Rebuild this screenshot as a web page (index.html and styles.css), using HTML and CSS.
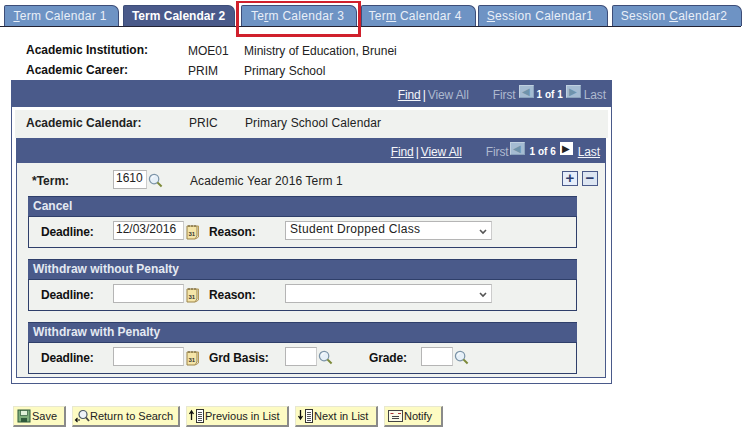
FILE: index.html
```html
<!DOCTYPE html>
<html lang="en">
<head>
<meta charset="utf-8">
<title>Term Calendar</title>
<link rel="stylesheet" href="styles.css">
</head>
<body>
<svg class="defs" width="0" height="0" aria-hidden="true">
  <symbol id="lens" viewBox="0 0 16 16">
    <circle cx="6.5" cy="6.5" r="5" fill="#e6f0f8" stroke="#7c94a8" stroke-width="1.3"/>
    <path d="M4 6a3 3 0 0 1 3-3" fill="none" stroke="#fff" stroke-width="1"/>
    <path d="M10 10l4.5 4.5" stroke="#7d8a3a" stroke-width="2.2"/>
  </symbol>
  <symbol id="cal" viewBox="0 0 13 16">
    <path d="M1 2h10v10l-2 3H1z" fill="#f5e5a8" stroke="#9a8348"/>
    <path d="M3 1v2M6 1v2M9 1v2" stroke="#6a5a30"/>
    <path d="M11 2h1.500v11l-3 2" fill="none" stroke="#b59a58"/>
    <text x="2.500" y="11.500" class="cal-text">31</text>
  </symbol>
  <symbol id="doclist" viewBox="0 0 17 16">
    <rect x="8.500" y="1.500" width="7" height="13" fill="#fff" stroke="#333"/>
    <path d="M10 4.500h4M10 6.500h4M10 8.500h4M10 10.500h4M10 12.500h4" stroke="#555"/>
  </symbol>
</svg>

<nav class="tabs">
  <a class="tab w115"><u>T</u>erm Calendar 1</a>
  <a class="tab tab-on w113">Term Calendar 2</a>
  <a class="tab w116 tab-mark">Te<u>r</u>m Calendar 3</a>
  <a class="tab w114">Ter<u>m</u> Calendar 4</a>
  <a class="tab w130"><u>S</u>ession Calendar1</a>
  <a class="tab w130">Session <u>C</u>alendar2</a>
</nav>

<section class="keys">
  <b class="keys-label">Academic Institution:</b><span>MOE01</span><span>Ministry of Education, Brunei</span>
  <b class="keys-label">Academic Career:</b><span>PRIM</span><span>Primary School</span>
</section>

<main class="outer">
  <div class="bar bar-outer">
    <span class="lnk">Find</span><span class="sep">|</span><span class="dim">View All</span>
    <span class="dim first">First</span>
    <span class="nav nav-off">◀</span><b class="count">1 of 1</b><span class="nav nav-off">▶</span>
    <span class="dim">Last</span>
  </div>
  <div class="outer-body">
    <div class="cal-row">
      <b class="cal-label">Academic Calendar:</b><span class="cal-code">PRIC</span><span class="spaced">Primary School Calendar</span>
    </div>
    <div class="inner">
      <div class="bar bar-inner">
        <span class="lnk">Find</span><span class="sep">|</span><span class="lnk">View All</span>
        <span class="dim first">First</span>
        <span class="nav nav-off">◀</span><b class="count">1 of 6</b><span class="nav nav-on">▶</span>
        <span class="lnk">Last</span>
      </div>
      <div class="term-row">
        <b class="term-label">*Term:</b>
        <span class="field f34">1610</span>
        <svg class="lens"><use href="#lens"/></svg>
        <span class="term-desc spaced">Academic Year 2016 Term 1</span>
        <span class="pm"><span class="pm-btn pm-add">+</span><span class="pm-btn">−</span></span>
      </div>

      <section class="group g-first">
        <h2 class="group-head">Cancel</h2>
        <div class="group-row">
          <b class="l-dead">Deadline:</b>
          <span class="field f71">12/03/2016</span>
          <svg class="cal"><use href="#cal"/></svg>
          <b class="l-reason">Reason:</b>
          <span class="field sel">Student Dropped Class<svg class="chev" viewBox="0 0 8 6"><path d="M1 1l3 3 3-3" fill="none" stroke="#555" stroke-width="1.600"/></svg></span>
        </div>
      </section>

      <section class="group">
        <h2 class="group-head">Withdraw without Penalty</h2>
        <div class="group-row">
          <b class="l-dead">Deadline:</b>
          <span class="field f71"></span>
          <svg class="cal"><use href="#cal"/></svg>
          <b class="l-reason">Reason:</b>
          <span class="field sel"><svg class="chev" viewBox="0 0 8 6"><path d="M1 1l3 3 3-3" fill="none" stroke="#555" stroke-width="1.600"/></svg></span>
        </div>
      </section>

      <section class="group">
        <h2 class="group-head">Withdraw with Penalty</h2>
        <div class="group-row">
          <b class="l-dead">Deadline:</b>
          <span class="field f71"></span>
          <svg class="cal"><use href="#cal"/></svg>
          <b class="l-reason">Grd Basis:</b>
          <span class="field f32"></span>
          <svg class="lens"><use href="#lens"/></svg>
          <b class="l-grade">Grade:</b>
          <span class="field f32"></span>
          <svg class="lens"><use href="#lens"/></svg>
        </div>
      </section>
    </div>
  </div>
</main>

<footer class="actions">
  <a class="btn b-save">
    <svg class="ic" viewBox="0 0 14 14"><rect x="1" y="1" width="12" height="12" fill="#7fae7c" stroke="#2f5a3a"/><rect x="3.500" y="1.500" width="7" height="5" fill="#dff0d8" stroke="#2f5a3a" stroke-width=".7"/><rect x="4" y="9" width="6" height="4" fill="#2f5a3a"/></svg>Save</a>
  <a class="btn b-return">
    <svg class="ic ic-ret" viewBox="0 0 16 14"><circle cx="9" cy="5.500" r="4" fill="#eef4fa" stroke="#4a5a6a" stroke-width="1.200"/><path d="M12 8.500l3 3.500" stroke="#444" stroke-width="1.800"/><path d="M6 11H1.500M3.500 9l-2 2 2 2" fill="none" stroke="#111" stroke-width="1.100"/></svg>Return to Search</a>
  <a class="btn b-prev">
    <svg class="ic-list" viewBox="0 0 17 16"><use href="#doclist"/><path d="M3.500 12V4M1.500 6l2-3 2 3" fill="none" stroke="#111" stroke-width="1.300"/></svg>Previous in List</a>
  <a class="btn b-next">
    <svg class="ic-list" viewBox="0 0 17 16"><use href="#doclist"/><path d="M3.500 2v8M1.500 8l2 3 2-3" fill="none" stroke="#111" stroke-width="1.300"/></svg>Next in List</a>
  <a class="btn b-notify">
    <svg class="ic-note" viewBox="0 0 16 14"><rect x=".5" y="1.500" width="14" height="11" fill="#fbfbe8" stroke="#444"/><path d="M2.500 4.500h3M10 4.500h3" stroke="#a33"/><path d="M4 7.500h7M4 9.500h7" stroke="#444"/></svg>Notify</a>
</footer>
</body>
</html>
```
FILE: styles.css
```css
* { box-sizing: border-box; }
html, body { margin: 0; height: 435px; overflow: hidden; }
body { background: #fff; color: #222; font: 12px/14px "Liberation Sans", Arial, sans-serif; }
.defs { position: absolute; }
.cal-text { font: bold 6px "Liberation Sans", sans-serif; fill: #333; }
.spaced { letter-spacing: .12px; }

.tabs { display: flex; height: 27px; padding: 5px 0 0 4px; border-bottom: 1px solid #223; width: 741px; }
.tab { flex: none; height: 21px; margin-right: 4px; padding-right: 3px; border: 1px solid #3d4d78; border-bottom: 0; border-radius: 2px 7px 0 0; background: #6e93c4; color: #e9eff8; text-align: center; line-height: 20px; letter-spacing: .3px; }
.tab-on { background: #4a5a8a; color: #fff; font-weight: bold; letter-spacing: 0; margin-right: 6px; padding-right: 1px; }
.w115 { width: 115px; } .w113 { width: 112px; } .w116 { width: 116px; margin-right: 4px; } .w114 { width: 115px; margin-right: 2px; padding-right: 7px; } .w130 { width: 130px; padding-right: 6px; }
.tab-mark { position: relative; }
.tab-mark::after { content: ""; position: absolute; left: -6px; right: -5px; top: -5px; height: 31px; border: 3px solid #d0202c; border-top-width: 2px; }

.keys { display: grid; grid-template-columns: 162px 56px 1fr; grid-auto-rows: 20px; margin: 14px 0 -1px 26px; height: 40px; align-items: center; }
.keys-label { color: #111; position: relative; top: -1px; }

.outer { margin: 0 0 0 11px; width: 601px; height: 304px; border: 1px solid #4a5a8a; border-top: 0; }
.bar { display: flex; justify-content: flex-end; align-items: center; background: #4a5a8a; color: #fff; font-size: 12px; letter-spacing: -.1px; }
.bar-outer { height: 27px; padding: 2px 6px 0 0; margin: 0 -1px; }
.lnk { text-decoration: underline; color: #f4f6fa; }
.sep { margin: 0 2px; }
.dim { color: #aeb9cf; }
.first { margin-left: 24px; }
.count { font-size: 10px; letter-spacing: 0; }
.nav { flex: none; width: 15px; height: 13px; font-size: 10px; line-height: 11px; text-align: center; letter-spacing: 0; margin: -6px 3px 0 3px; overflow: hidden; }
.nav-off { background: #a4bbd2; color: #6f93ac; border: 1px solid #c0d0e0; border-right-color: #8aa2bc; border-bottom-color: #8aa2bc; }
.nav-on { background: #fff; color: #222; width: 13px; line-height: 13px; }

.outer-body { margin: 0 3px 0 3px; padding-top: 3px; }
.cal-row { display: flex; align-items: center; height: 28px; width: 593px; background: #f0f2ef; padding: 0 0 2px 11px; }
.cal-label { width: 163px; }
.cal-code { width: 56px; }
.inner { width: 590px; margin: 0 0 0 1px; height: 240px; background: #f0f2ef; border: 1px solid #4a5a8a; border-top: 0; }
.bar-inner { height: 25px; margin: 0 -1px; padding: 2px 6px 0 0; }
.bar-inner .nav { margin-left: 4px; margin-right: 5px; }
.bar-inner .nav-off { margin-left: 1px; }

.term-row { display: flex; align-items: center; height: 33px; padding: 2px 0 0 15px; }
.term-label { width: 81px; }
.term-desc { margin-left: 27px; }
.pm { margin-left: auto; margin-right: 7px; display: flex; gap: 4px; margin-top: -5px; }
.pm-btn { width: 16px; height: 15px; background: #dde6f2; border: 1px solid #4a5a8a; color: #2f3f70; font: bold 15px/12px "Liberation Sans", sans-serif; text-align: center; }
.pm-add { background: #e6eefa; }

.group { width: 549px; margin: 11px 0 0 11px; height: 52px; border: 1px solid #2f3f6a; border-top: 0; }
.g-first { margin-top: 0; }
.group-head { margin: 0 -1px; height: 21px; background: #4a5a8a; border-bottom: 1px solid #2f3f6a; border-top: 1px solid #2f3f6a; color: #e4e9f2; font: bold 12px/18px "Liberation Sans", sans-serif; padding-left: 5px; }
.group-row { display: flex; align-items: center; height: 29px; padding-left: 12px; color: #111; }
.l-dead { width: 72px; letter-spacing: -.15px; }
.l-reason { width: 76px; margin-left: 10px; letter-spacing: -.1px; }
.l-grade { width: 52px; margin-left: 36px; letter-spacing: -.15px; }
.field { display: block; flex: none; height: 19px; margin-bottom: 2px; background: #fff; border: 1px solid #b5b5b5; border-right-color: #ccc; padding: 0 2px; line-height: 15px; color: #222; }
.f34 { width: 34px; }
.f71 { width: 71px; }
.f32 { width: 32px; }
.sel { width: 207px; position: relative; padding-left: 4px; letter-spacing: .3px; }
.chev { position: absolute; right: 4px; top: 7px; width: 8px; height: 6px; }
.lens { width: 15px; height: 15px; margin-left: 1px; }
.cal { width: 13px; height: 16px; margin-left: 2px; }

.actions { display: flex; margin: 22px 0 0 13px; gap: 6px; }
.btn { display: flex; flex: none; align-items: center; height: 21px; background: #fdfbc3; border: 1px solid #e8e8d0; border-right: 2px solid #8a8a8a; border-bottom: 2px solid #8a8a8a; color: #222; font-size: 11px; white-space: nowrap; }
.ic { width: 14px; height: 14px; margin: 0 1px 0 3px; }
.ic-ret { width: 16px; margin: 0 0 0 1px; }
.ic-list { width: 17px; height: 16px; margin-left: 1px; }
.ic-note { width: 16px; height: 14px; margin: 0 0 0 3px; }
.b-save { width: 53px; }
.b-return { width: 108px; }
.b-prev { width: 103px; }
.b-next { width: 83px; }
.b-notify { width: 59px; }
```
